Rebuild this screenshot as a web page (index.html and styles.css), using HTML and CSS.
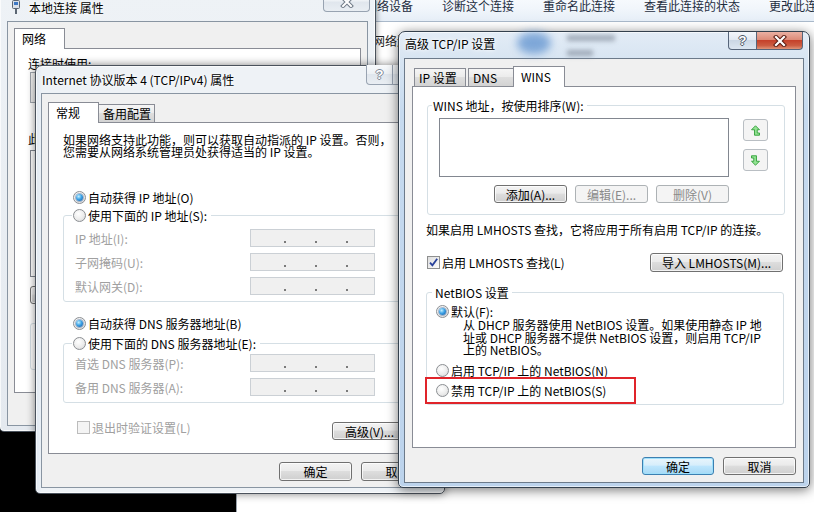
FILE: index.html
```html
<!DOCTYPE html>
<html lang="zh-CN">
<head>
<meta charset="utf-8">
<title>高级 TCP/IP 设置</title>
<link rel="stylesheet" href="styles.css">
</head>
<body>
<div class="desktop">

  <div class="explorer">
    <div class="ex-toolbar">
      <span>禁用此网络设备</span>
      <span>诊断这个连接</span>
      <span>重命名此连接</span>
      <span>查看此连接的状态</span>
      <span>更改此连接的设置</span>
    </div>
    <div class="ex-body">网络连接</div>
  </div>

  <!-- Window 1 -->
  <div class="win win1">
    <div class="titlebar">
      <svg class="net-ico" width="8" height="14" viewBox="0 0 8 14"><rect x="0.5" y="0.5" width="7" height="8" rx="1" fill="#d9e0e8" stroke="#5b6673"/><rect x="2" y="2" width="4" height="3" fill="#3d78c4"/><rect x="3" y="9" width="2" height="5" fill="#5b6673"/></svg>
      <span class="title">本地连接 属性</span>
    </div>
    <div class="caps">
      <div class="cap cap-close solo inactive">
        <svg width="16" height="12" viewBox="0 0 16 12"><path d="M4 2 L12 10 M12 2 L4 10" stroke="#707b88" stroke-width="4" stroke-linecap="square"/><path d="M4 2 L12 10 M12 2 L4 10" stroke="#fff" stroke-width="2" stroke-linecap="square"/></svg>
      </div>
    </div>
    <div class="client">
      <div class="tabs"><div class="tab sel tab-net">网络</div></div>
      <div class="panel p1">
        <div class="p1-inner">
          <div class="p1-l1">连接时使用:</div>
          <div class="p1-box p1-adapter"></div>
          <div class="p1-l2">此连接使用下列项目(O):</div>
          <div class="p1-box p1-items"></div>
          <div class="btn p1-btn">安装(N)...</div>
          <fieldset class="grp p1-desc"><legend>描述</legend></fieldset>
        </div>
      </div>
    </div>
  </div>

  <!-- Window 2 -->
  <div class="win win2">
    <div class="titlebar"><span class="title">Internet 协议版本 4 (TCP/IPv4) 属性</span></div>
    <div class="caps">
      <div class="cap cap-help inactive"><span class="qmark">?</span></div>
      <div class="cap cap-close inactive">
        <svg width="16" height="12" viewBox="0 0 16 12"><path d="M4 2 L12 10 M12 2 L4 10" stroke="#707b88" stroke-width="4" stroke-linecap="square"/><path d="M4 2 L12 10 M12 2 L4 10" stroke="#fff" stroke-width="2" stroke-linecap="square"/></svg>
      </div>
    </div>
    <div class="client">
      <div class="tabs">
        <div class="tab sel tab-gen">常规</div>
        <div class="tab tab-alt">备用配置</div>
      </div>
      <div class="panel p2">
        <div class="intro">如果网络支持此功能，则可以获取自动指派的 IP 设置。否则，<br>您需要从网络系统管理员处获得适当的 IP 设置。</div>
        <div class="ropt r-auto-ip"><span class="radio on"></span>自动获得 IP 地址(O)</div>
        <fieldset class="grp g-ip">
          <legend><span class="ropt"><span class="radio"></span>使用下面的 IP 地址(S):</span></legend>
          <div class="frow"><span class="flabel">IP 地址(I):</span><span class="ipbox"><i></i><i></i><i></i></span></div>
          <div class="frow"><span class="flabel">子网掩码(U):</span><span class="ipbox"><i></i><i></i><i></i></span></div>
          <div class="frow"><span class="flabel">默认网关(D):</span><span class="ipbox"><i></i><i></i><i></i></span></div>
        </fieldset>
        <div class="ropt r-auto-dns"><span class="radio on"></span>自动获得 DNS 服务器地址(B)</div>
        <fieldset class="grp g-dns">
          <legend><span class="ropt"><span class="radio"></span>使用下面的 DNS 服务器地址(E):</span></legend>
          <div class="frow"><span class="flabel">首选 DNS 服务器(P):</span><span class="ipbox"><i></i><i></i><i></i></span></div>
          <div class="frow"><span class="flabel">备用 DNS 服务器(A):</span><span class="ipbox"><i></i><i></i><i></i></span></div>
        </fieldset>
        <div class="chkrow">
          <span class="chk-label dis"><span class="check dis"></span>退出时验证设置(L)</span>
          <div class="btn btn-adv">高级(V)...</div>
        </div>
      </div>
      <div class="btnrow">
        <div class="btn w73">确定</div>
        <div class="btn w73">取消</div>
      </div>
    </div>
  </div>

  <!-- Window 3 -->
  <div class="win win3">
    <div class="glass-blob"></div>
    <div class="glass-txt g1"></div>
    <div class="glass-txt g2"></div>
    <div class="titlebar"><span class="title">高级 TCP/IP 设置</span></div>
    <div class="caps">
      <div class="cap cap-help"><span class="qmark">?</span></div>
      <div class="cap cap-close">
        <svg width="16" height="12" viewBox="0 0 16 12"><path d="M4 2 L12 10 M12 2 L4 10" stroke="#5a1c12" stroke-width="4.2" stroke-linecap="square"/><path d="M4 2 L12 10 M12 2 L4 10" stroke="#fff" stroke-width="2.2" stroke-linecap="square"/></svg>
      </div>
    </div>
    <div class="client">
      <div class="tabs">
        <div class="tab tab-ip">IP 设置</div>
        <div class="tab tab-dns">DNS</div>
        <div class="tab sel tab-wins">WINS</div>
      </div>
      <div class="panel p3">
        <fieldset class="grp g-wins">
          <legend>WINS 地址，按使用排序(W):</legend>
          <div class="wins-row">
            <div class="listbox"></div>
            <div class="arrows">
              <div class="abtn"><svg width="9" height="11" viewBox="0 0 12 14"><polygon points="6,0.7 11.3,6 8.3,6 8.3,10.3 11.3,10.3 11.3,13.3 4.7,13.3 4.7,6 0.7,6" fill="#93e293" stroke="#2f9f37" stroke-width="1.2" stroke-linejoin="round"/></svg></div>
              <div class="abtn"><svg width="9" height="11" viewBox="0 0 12 14"><polygon points="0.7,0.7 7.3,0.7 7.3,8 11.3,8 6,13.3 0.7,8 3.7,8 3.7,3.7 0.7,3.7" fill="#93e293" stroke="#2f9f37" stroke-width="1.2" stroke-linejoin="round"/></svg></div>
            </div>
          </div>
          <div class="wins-btns">
            <div class="btn w73">添加(A)...</div>
            <div class="btn w73 dis">编辑(E)...</div>
            <div class="btn w73 dis">删除(V)</div>
          </div>
        </fieldset>
        <div class="lm-note">如果启用 LMHOSTS 查找，它将应用于所有启用 TCP/IP 的连接。</div>
        <div class="lm-row">
          <span class="chk-label"><span class="check"><svg width="11" height="11" viewBox="0 0 11 11"><path d="M2 5.6 L4.4 8.4 L9.2 1.8" fill="none" stroke="#27409a" stroke-width="1.8"/></svg></span>启用 LMHOSTS 查找(L)</span>
          <div class="btn btn-import">导入 LMHOSTS(M)...</div>
        </div>
        <fieldset class="grp g-netbios">
          <legend>NetBIOS 设置</legend>
          <div class="ropt"><span class="radio on"></span>默认(F):</div>
          <div class="nb-desc">从 DHCP 服务器使用 NetBIOS 设置。如果使用静态 IP 地<br>址或 DHCP 服务器不提供 NetBIOS 设置，则启用 TCP/IP<br>上的 NetBIOS。</div>
          <div class="ropt mt7"><span class="radio"></span>启用 TCP/IP 上的 NetBIOS(N)</div>
          <div class="ropt mt7 marked"><span class="radio"></span>禁用 TCP/IP 上的 NetBIOS(S)</div>
        </fieldset>
      </div>
      <div class="btnrow">
        <div class="btn w72 default">确定</div>
        <div class="btn w73">取消</div>
      </div>
    </div>
  </div>

</div>
</body>
</html>
```

FILE: styles.css
```css
* { box-sizing: border-box; }
html, body { margin: 0; padding: 0; }
body {
  background: #000;
  font-family: "Noto Sans CJK SC", "Noto Sans", "Liberation Sans", sans-serif;
  font-size: 12px;
  line-height: 13px;
  color: #000;
}
.desktop { position: relative; width: 814px; height: 512px; overflow: hidden; background: #000; }

/* background explorer window */
.explorer {
  position: absolute; left: 236px; top: 0; width: 578px; height: 512px; z-index: 0;
  background: #fff; border-left: 1px solid #9aa3ad;
}
.ex-toolbar {
  display: flex; align-items: center; gap: 29px;
  height: 32px; margin-top: -10px; padding-left: 92px;
  background: linear-gradient(#fbfdff, #f1f6fb 60%, #e6eef7);
  border-bottom: 1px solid #aab9ca;
  color: #1e2d3f; white-space: nowrap;
}
.ex-body { padding: 12px 0 0 136px; color: #222; white-space: nowrap; }

/* windows */
.win {
  position: absolute; display: flex; flex-direction: column;
  border: 1px solid #4a525c; border-radius: 7px 7px 5px 5px;
}
.win1 {
  left: -1px; top: -7px; width: 377px; height: 439px; z-index: 1;
  background: linear-gradient(#eef2f6, #e4e9ef);
  box-shadow: inset 0 0 0 1px rgba(255,255,255,.7), 0 0 6px rgba(0,0,0,.5);
}
.win2 {
  left: 35px; top: 65px; width: 410px; height: 429px; z-index: 2;
  background: linear-gradient(90deg, #dfe8f2, #eef2f6 6px, #eef2f6);
  box-shadow: inset 0 0 0 1px rgba(255,255,255,.7), 0 0 8px rgba(0,0,0,.5);
}
.win3 {
  left: 398px; top: 31px; width: 412px; height: 457px; z-index: 3;
  border-color: #34404d;
  background: linear-gradient(180deg, #e3ecf6 0, #d8e5f2 26px, #c6daef 80px, #bcd3ec 100%);
  box-shadow: inset 0 0 0 1px rgba(255,255,255,.6), 0 2px 12px rgba(0,0,0,.55);
}
.titlebar { display: flex; align-items: center; white-space: nowrap; flex: none; position: relative; }
.win1 .titlebar { height: 27px; padding-left: 12px; }
.win2 .titlebar { height: 27px; padding-left: 6px; }
.win3 .titlebar { height: 26px; padding-left: 6px; padding-bottom: 3px; }
.net-ico { margin-right: 9px; margin-top: -2px; }
.title { color: #000; text-shadow: 0 0 6px #fff, 0 0 3px #fff; }

/* glass blur behind active title */
.glass-blob {
  position: absolute; left: 118px; top: 0; width: 34px; height: 22px;
  border-radius: 50%; background: #5f92cf; filter: blur(4px); opacity: .75;
}
.glass-txt { position: absolute; height: 6px; background: #8f9aa8; filter: blur(2.5px); opacity: .8; }
.glass-txt.g1 { left: 168px; top: 3px; width: 48px; }
.glass-txt.g2 { left: 168px; top: 18px; width: 26px; }

/* caption buttons */
.caps { position: absolute; display: flex; z-index: 2; }
.win1 .caps { top: -1px; right: 5px; height: 19px; }
.win2 .caps { top: -1px; right: 5px; height: 20px; }
.win3 .caps { top: 0; right: 6px; height: 18px; }
.cap {
  height: 100%; display: flex; align-items: center; justify-content: center;
  border: 1px solid #56657a; border-top: none;
}
.cap-help {
  width: 27px; border-radius: 0 0 0 4px;
  background: linear-gradient(#f4f7fb, #e2e9f2 45%, #cbd7e5 50%, #dce6f1);
}
.win3 .cap-help { width: 29px; }
.cap-close {
  width: 46px; border-left: none; border-radius: 0 0 4px 0;
  background: linear-gradient(#eab0a2, #dc8b78 45%, #c5412a 50%, #cc5d42 80%, #df9478);
}
.cap-close.solo { width: 47px; border-left: 1px solid #8e9aa8; border-radius: 0 0 4px 4px; }
.cap.inactive {
  border-color: #98a3b1;
  background: linear-gradient(#f8fafc, #edf1f5 45%, #e0e6ed 50%, #e9eef3);
}
.qmark {
  font-family: "Liberation Sans", sans-serif; font-weight: bold; font-size: 13px; line-height: 13px;
  color: #fff;
  text-shadow: 1px 0 #4d5866, -1px 0 #4d5866, 0 1px #4d5866, 0 -1px #4d5866;
}
.inactive .qmark { text-shadow: 1px 0 #7d8896, -1px 0 #7d8896, 0 1px #7d8896, 0 -1px #7d8896; }

/* client area */
.client {
  flex: 1; margin: 0 5px 5px; background: #f0f0f0;
  border: 1px solid #8995a2; display: flex; flex-direction: column;
}
.win1 .client { margin: 0 7px 5px; }
.win3 .client { margin-bottom: 4px; border-color: #6c7a8a; }

/* tabs */
.tabs { display: flex; align-items: flex-end; height: 20px; flex: none; white-space: nowrap; }
.win1 .tabs { margin: 6px 0 0 6px; }
.win2 .tabs { margin: 8px 0 0 6px; }
.win3 .tabs { margin: 7px 0 0 7px; padding-left: 2px; }
.tab {
  height: 18px; border: 1px solid #898c95; border-bottom: none;
  padding-left: 4px; line-height: 17px;
  background: linear-gradient(#f5f5f5, #ececec 45%, #dedede 50%, #d3d3d3);
}
.tab.sel {
  height: 21px; margin-bottom: -1px; position: relative; z-index: 1;
  background: #fff; padding-left: 7px; line-height: 19px;
}
.tab-net { width: 51px; }
.tab-gen { width: 51px; }
.tab-alt { width: 56px; border-left: none; }
.tab-ip { width: 52px; }
.tab-dns { width: 46px; margin-left: 2px; }
.tab-wins { width: 52px; margin-left: -1px; }

.panel { background: #fff; border: 1px solid #898c95; flex: none; overflow: hidden; white-space: nowrap; }
.win1 .panel { margin: 0 6px; height: 345px; }
.win2 .panel { margin: 0 6px; height: 332px; }
.win3 .panel { margin: 0 7px; height: 362px; }

/* common controls */
.btn {
  display: flex; align-items: center; justify-content: center; flex: none;
  height: 18px; border: 1px solid #707070; border-radius: 3px;
  background: linear-gradient(#f3f3f3, #ebebeb 45%, #dddddd 50%, #cfcfcf);
  box-shadow: inset 0 0 0 1px rgba(255,255,255,.75);
  white-space: nowrap; color: #000;
}
.btn.dis { border-color: #adb2b5; background: #f4f4f4; color: #8a8a8a; box-shadow: none; }
.btn.default {
  border-color: #3c7fb1;
  background: linear-gradient(#e9f5fc, #d7eefb 45%, #bee6fd 50%, #a7d9f5);
  box-shadow: inset 0 0 0 1px #9fe0fb;
}
.w73 { width: 73px; }
.w72 { width: 72px; }
.btnrow { display: flex; justify-content: flex-end; gap: 9px; flex: none; }
.win2 .btnrow { margin-top: 8px; padding-right: 4px; }
.win2 .btnrow .btn { height: 19px; }
.win3 .btnrow { margin-top: 9px; padding-right: 7px; }

.radio {
  width: 13px; height: 13px; border-radius: 50%; flex: none; position: relative;
  border: 1px solid #8c8f93;
  background: radial-gradient(circle at 40% 35%, #ffffff 0, #ececec 55%, #d2d2d2 100%);
}
.radio.on::after {
  content: ""; position: absolute; left: 2px; top: 2px; width: 7px; height: 7px; border-radius: 50%;
  background: radial-gradient(circle at 38% 35%, #c4f0ff 0, #3ea3e6 45%, #11529f 100%);
  box-shadow: 0 0 0 1px rgba(20,70,130,.35);
}
.ropt { display: flex; align-items: center; gap: 2px; height: 13px; white-space: nowrap; }
.mt7 { margin-top: 7px; }

.check {
  width: 13px; height: 13px; flex: none; display: flex; align-items: center; justify-content: center;
  border: 1px solid #8e8f8f;
  background: linear-gradient(135deg, #dedede, #fbfbfb);
}
.check.dis { border-color: #bcbcbc; background: #f4f4f4; }
.chk-label { display: flex; align-items: center; gap: 2px; white-space: nowrap; }
.chk-label.dis { color: #a0a0a0; }

.grp { border: 1px solid #d5dfe5; border-radius: 3px; margin: 0; padding: 0; min-width: 0; }
.grp legend { padding: 0; line-height: 13px; white-space: nowrap; }

/* window 1 panel */
.p1-inner { padding-left: 13px; }
.p1-l1 { margin-top: 8px; }
.p1-box { border: 1px solid #828790; background: #fff; width: 310px; margin-left: 2px; }
.p1-adapter { margin-top: 2px; height: 31px; background: linear-gradient(#f7f7f7, #ececec); border-color: #a0a6ae; }
.p1-l2 { margin-top: 29px; }
.p1-items { margin-top: 5px; height: 127px; }
.p1-btn { width: 80px; margin: 9px 0 0 2px; }
.p1-desc { margin: 13px 0 0 2px; width: 310px; height: 53px; padding: 0 0 0 8px; }
.p1-desc legend { padding: 0 2px; }

/* window 2 panel */
.intro { margin: 11px 0 0 14px; line-height: 12px; }
.r-auto-ip { margin: 33px 0 0 24px; }
.g-ip { margin: 5px 6px 0 14px; padding: 7px 0 6px 11px; }
.g-dns { margin: 7px 6px 0 14px; padding: 4px 0 6px 11px; }
.g-ip legend, .g-dns legend { margin-left: -3px; padding: 0 4px 0 1px; }
.r-auto-dns { margin: 15px 0 0 24px; }
.frow { display: flex; align-items: center; height: 18px; color: #a0a0a0; }
.frow + .frow { margin-top: 6px; }
.flabel { width: 175px; flex: none; }
.ipbox {
  width: 125px; height: 18px; flex: none; display: flex; align-items: flex-end; gap: 29px;
  padding: 0 0 3px 33px; border: 1px solid #cbd0d5; background: #f0f0f0;
}
.ipbox i { display: block; width: 2px; height: 2px; background: #7a7a7a; }
.chkrow { display: flex; align-items: flex-start; margin: 18px 24px 0 28px; }
.btn-adv { margin-left: auto; margin-top: 1px; width: 75px; }

/* window 3 panel */
.g-wins { margin: 12px 10px 0 14px; padding: 6px 0 11px 11px; }
.g-wins legend { margin-left: -7px; padding: 0 3px 0 1px; }
.wins-row { display: flex; align-items: flex-start; }
.listbox { width: 290px; height: 59px; border: 1px solid #828790; background: #fff; flex: none; }
.arrows { display: flex; flex-direction: column; gap: 8px; margin: 1px 0 0 14px; }
.abtn {
  width: 25px; height: 22px; display: flex; align-items: center; justify-content: center;
  border: 1px solid #b9bec3; border-radius: 3px; background: #f4f4f4;
}
.wins-btns { display: flex; justify-content: flex-end; gap: 8px; width: 290px; margin-top: 8px; }
.lm-note { margin: 8px 0 0 13px; }
.lm-row { display: flex; align-items: center; justify-content: space-between; height: 19px; margin: 17px 12px 0 14px; }
.btn-import { width: 133px; height: 19px; }
.g-netbios { margin: 14px 11px 0 13px; padding: 6px 0 7px 9px; }
.g-netbios legend { margin-left: -4px; padding: 0 3px; }
.nb-desc { margin: 1px 0 0 27px; line-height: 12.5px; white-space: nowrap; }
.marked { position: relative; }
.marked::after {
  content: ""; position: absolute; left: -11px; top: -7px; width: 207px; height: 23px;
  border: 2px solid #e0242a;
}
```
